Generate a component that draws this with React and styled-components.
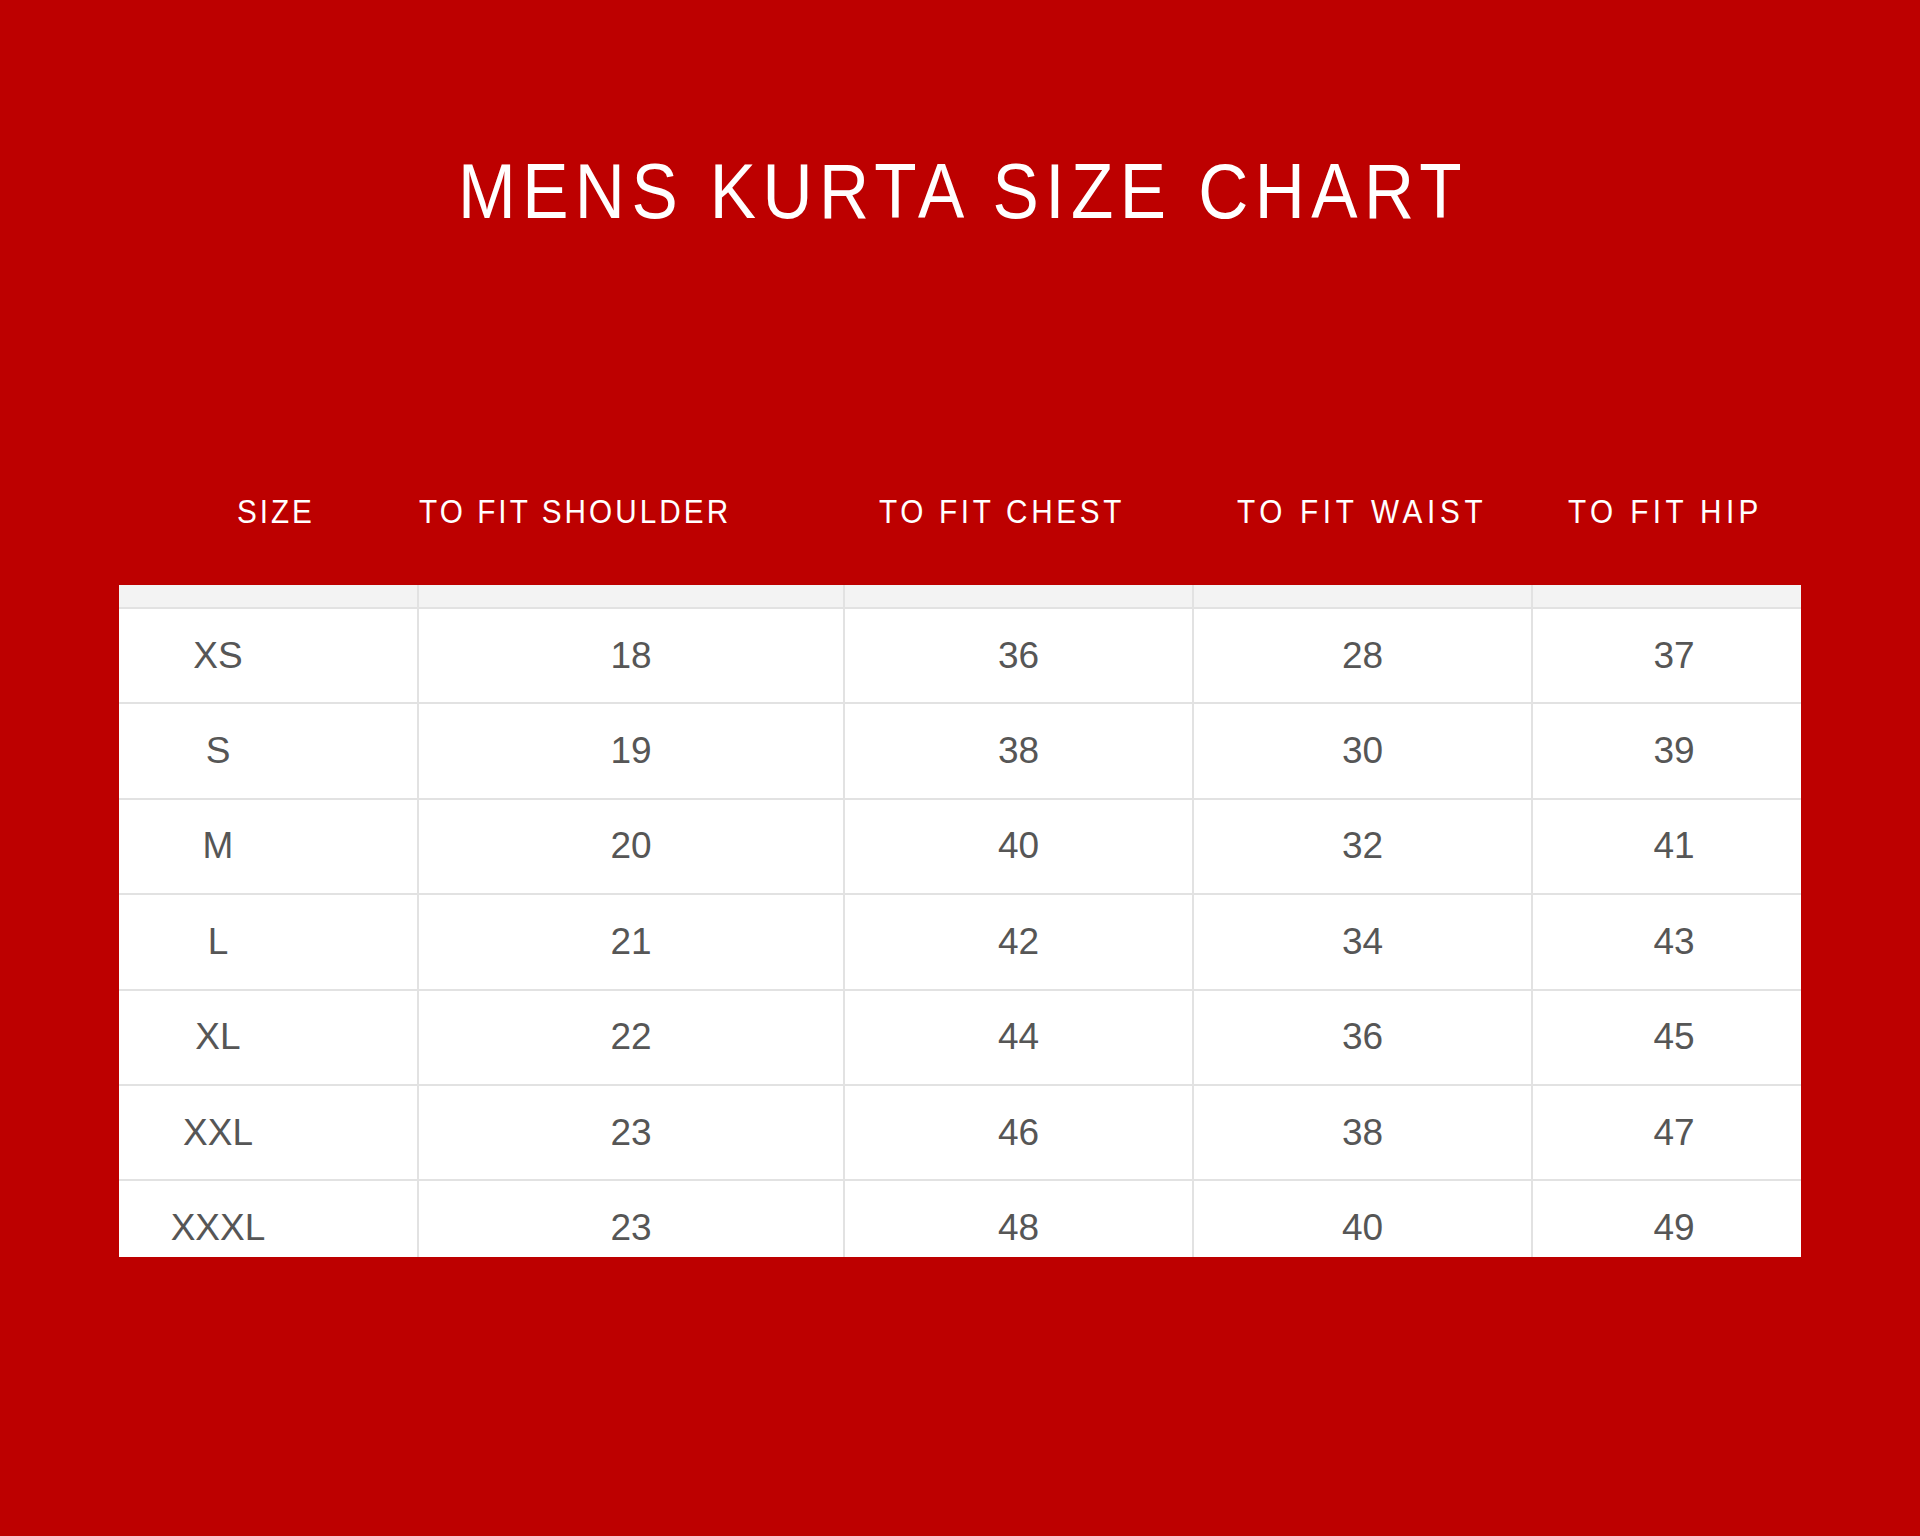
import React from "react";
import styled, { createGlobalStyle } from "styled-components";

const red = "#bd0000";
const line = "#e2e2e2";
const ink = "#565656";
const sans = `"Liberation Sans", Arial, sans-serif`;

const GlobalStyle = createGlobalStyle`
  html, body {
    margin: 0;
    padding: 0;
    background: ${red};
  }
`;

const cols = "300px 426px 349px 339px 268px";

const Page = styled.div`
  min-height: 1536px;
  background: ${red};
  padding-top: 153px;
  box-sizing: border-box;
`;
const Title = styled.h1`
  margin: 0;
  font-weight: 400;
  text-align: center;
`;
// condensed look: the chart uses a narrow grotesque
const TitleText = styled.span`
  display: inline-block;
  font-family: ${sans};
  font-size: 77px;
  line-height: 1;
  letter-spacing: 7.2px;
  padding-left: 7.2px;
  color: #fff;
  white-space: nowrap;
  transform: scaleX(0.9);
  transform-origin: center;
`;
const Labels = styled.div`
  width: 1682px;
  margin: 265px auto 0;
  display: grid;
  grid-template-columns: ${cols};
`;
const Label = styled.div`
  width: max-content;
  margin-left: ${p => p.$pad}px;
  font-family: ${sans};
  font-size: 33px;
  line-height: 1;
  letter-spacing: ${p => p.$ls}px;
  color: #fff;
  white-space: nowrap;
  transform: scaleX(0.9);
  transform-origin: left center;
`;
const Table = styled.div`
  width: 1682px;
  height: 672px;
  margin: 57px auto 0;
  background: #fff;
  overflow: hidden;
`;
const Strip = styled.div`
  display: grid;
  grid-template-columns: ${cols};
  height: 24px;
  background: #f3f3f3;
  border-bottom: 2px solid ${line};
  box-sizing: border-box;
`;
const Row = styled.div`
  display: grid;
  grid-template-columns: ${cols};
  height: 95.4px;
  border-bottom: 2px solid ${line};
  box-sizing: border-box;
`;
const Cell = styled.div`
  display: flex;
  align-items: center;
  justify-content: center;
  padding: 0 ${p => p.$right || 0}px 0 ${p => p.$left || 0}px;
  border-right: 2px solid ${line};
  font-family: ${sans};
  font-size: 37px;
  color: ${ink};
  &:last-child {
    border-right: none;
  }
`;

// text, left offset in its column, letter spacing
const labels = [
  ["SIZE", 118, 3.3],
  ["TO FIT SHOULDER", 0, 3.4],
  ["TO FIT CHEST", 34, 4.1],
  ["TO FIT WAIST", 43, 5.2],
  ["TO FIT HIP", 35, 4.9],
];

const rows = [
  ["XS", 18, 36, 28, 37],
  ["S", 19, 38, 30, 39],
  ["M", 20, 40, 32, 41],
  ["L", 21, 42, 34, 43],
  ["XL", 22, 44, 36, 45],
  ["XXL", 23, 46, 38, 47],
  ["XXXL", 23, 48, 40, 49],
];

// per column padding so values sit where the chart has them
const pads = [
  { $right: 100 },
  {},
  {},
  {},
  { $left: 14 },
];

export default function App() {
  return (
    <Page>
      <GlobalStyle />
      <Title>
        <TitleText>MENS KURTA SIZE CHART</TitleText>
      </Title>
      <Labels>
        {labels.map(([t, pad, ls]) => (
          <Label key={t} $pad={pad} $ls={ls}>{t}</Label>
        ))}
      </Labels>
      <Table>
        <Strip>
          {pads.map((p, i) => <Cell key={i} {...p} />)}
        </Strip>
        {rows.map(r => (
          <Row key={r[0]}>
            {r.map((v, i) => (
              <Cell key={i} {...pads[i]}>{v}</Cell>
            ))}
          </Row>
        ))}
      </Table>
    </Page>
  );
}
